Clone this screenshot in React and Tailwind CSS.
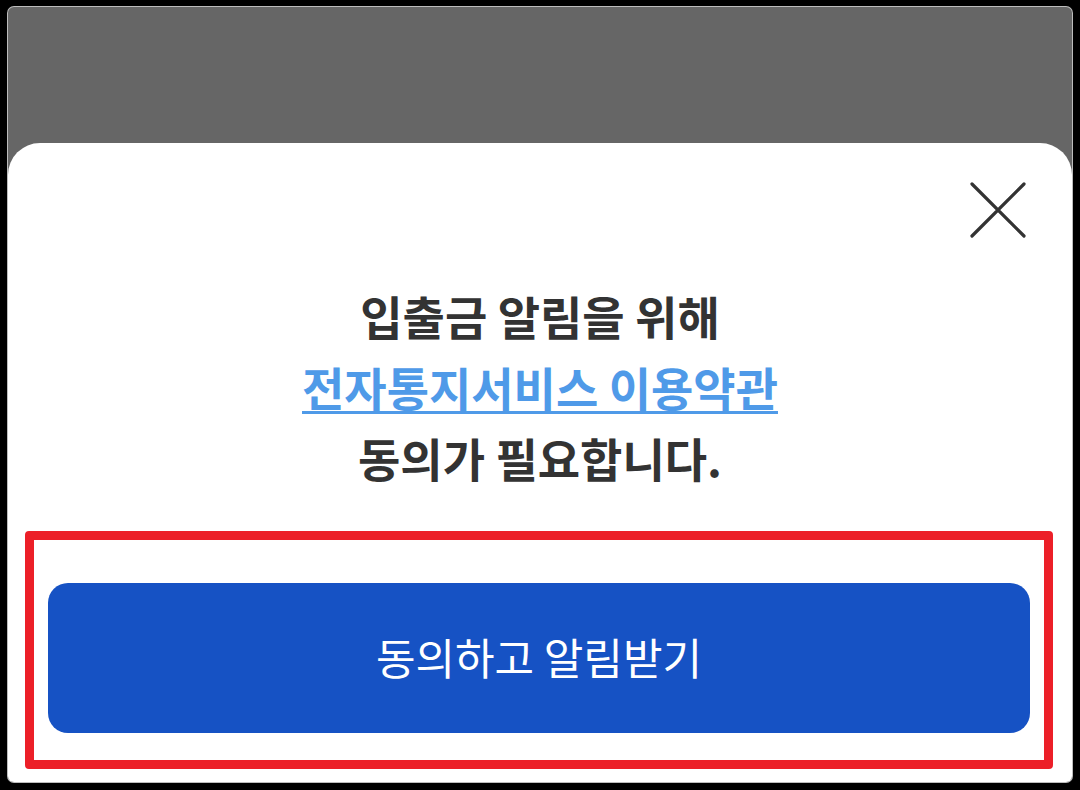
import React from 'react';

const FONT = "font-['Noto_Sans_CJK_KR','Noto_Sans',sans-serif]";

function CloseIcon() {
  return (
    <svg width="56" height="56" viewBox="0 0 56 56" fill="none">
      <path d="M2 2L54 54M54 2L2 54" stroke="#333333" strokeWidth="3.2" strokeLinecap="round" />
    </svg>
  );
}

export default function App() {
  return (
    <div className={`w-[1080px] h-[790px] bg-black pt-[7px] pb-[8px] px-[8px] ${FONT}`}>
      <div className="h-full flex flex-col bg-[#666666] rounded-[6px] shadow-[0_0_0_1px_#bdbdbd] overflow-hidden">
        {/* dimmed backdrop */}
        <div className="h-[136px] shrink-0"></div>

        {/* bottom sheet */}
        <div className="relative flex-1 bg-white rounded-t-[32px] flex flex-col">
          <button className="absolute top-[39px] right-[46px]">
            <CloseIcon />
          </button>

          <div className="pt-[137px] text-center text-[46px] leading-[71px] font-semibold text-[#333333]">
            <p>입출금 알림을 위해</p>
            <p>
              <a className="text-[#4f9ae8] underline decoration-[3px] underline-offset-[5px]">
                전자통지서비스 이용약관
              </a>
            </p>
            <p>동의가 필요합니다.</p>
          </div>

          <div className="mt-[38px] ml-[17px] mr-[19px] border-[9px] border-[#ec1f28] rounded-[4px] pt-[43px] pb-[27px] px-[14px]">
            <button className="w-full h-[150px] bg-[#1652c4] rounded-[20px] text-white text-[43px] font-normal pb-[3px]">
              동의하고 알림받기
            </button>
          </div>
        </div>
      </div>
    </div>
  );
}
